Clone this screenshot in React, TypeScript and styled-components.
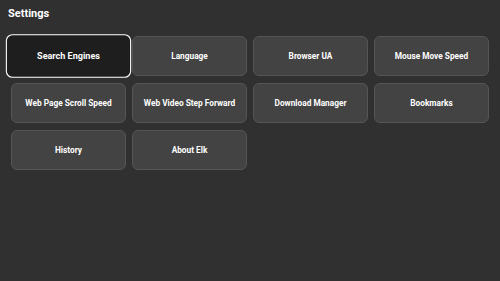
import React from "react";
import styled, { createGlobalStyle } from "styled-components";

const GlobalStyle = createGlobalStyle`
    html, body {
        margin: 0;
        padding: 0;
        background-color: #303030;
    }
    body {
        font-family: Roboto, "Liberation Sans", sans-serif;
    }
`;

const Page = styled.div`
    width: 500px;
    height: 281px;
    background-color: #303030;
    box-sizing: border-box;
    padding: 6px 10px 0 11px;
`;

const Title = styled.h1`
    margin: 0 0 0 -3px;
    font-size: 11px;
    font-weight: 700;
    color: #ffffff;
    line-height: 16px;
`;

const Grid = styled.div`
    display: grid;
    grid-template-columns: repeat(4, 115px);
    grid-auto-rows: 40px;
    column-gap: 6px;
    row-gap: 7px;
    margin-top: 14px;
`;

const Tile = styled.div<{ $focused?: boolean }>`
    display: flex;
    align-items: center;
    justify-content: center;
    box-sizing: border-box;
    border-radius: 6px;
    font-size: 8.3px;
    font-weight: 700;
    color: #ffffff;
    background-color: ${(p) => (p.$focused ? "#1e1e1e" : "#434343")};
    border: ${(p) => (p.$focused ? "1.8px solid #ffffff" : "1px solid #555555")};
    transform: ${(p) => (p.$focused ? "scale(1.09)" : "none")};
    position: relative;
    z-index: ${(p) => (p.$focused ? 1 : 0)};
`;

const items = [
    "Search Engines",
    "Language",
    "Browser UA",
    "Mouse Move Speed",
    "Web Page Scroll Speed",
    "Web Video Step Forward",
    "Download Manager",
    "Bookmarks",
    "History",
    "About Elk",
];

const App: React.FC = () => {
    return (
        <>
            <GlobalStyle />
            <Page>
                <Title>Settings</Title>
                <Grid>
                    {items.map((label, i) => (
                        <Tile key={label} $focused={i === 0}>
                            {label}
                        </Tile>
                    ))}
                </Grid>
            </Page>
        </>
    );
};

export default App;
